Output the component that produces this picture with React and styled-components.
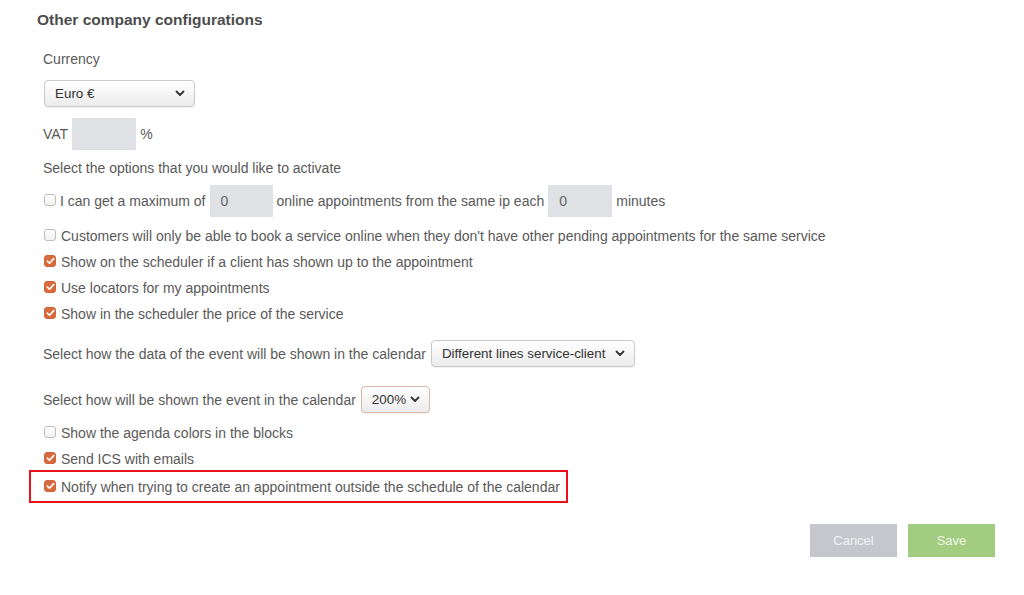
import React from "react";
import styled, { createGlobalStyle } from "styled-components";

const GlobalStyle = createGlobalStyle`
  body {
    margin: 0;
    background: #fff;
    font-family: "Liberation Sans", Arial, sans-serif;
    color: #595959;
  }
`;

function Chevron() {
  return (
    <svg width="10" height="7" viewBox="0 0 10 7">
      <path d="M1.5 1.5 L5 5 L8.5 1.5" fill="none" stroke="#333" strokeWidth="1.8" strokeLinecap="round" strokeLinejoin="round" />
    </svg>
  );
}

function Check({ checked }) {
  return (
    <Box checked={checked}>
      {checked && (
        <svg width="9" height="8" viewBox="0 0 9 8">
          <path d="M1.3 4.2 L3.5 6.2 L7.7 1.6" fill="none" stroke="#fff" strokeWidth="1.7" strokeLinecap="round" strokeLinejoin="round" />
        </svg>
      )}
    </Box>
  );
}

function Option({ checked, children }) {
  return (
    <OptionRow>
      <Check checked={checked} />
      <span>{children}</span>
    </OptionRow>
  );
}

function App() {
  return (
    <>
      <GlobalStyle />
      <Page>
        <Title>Other company configurations</Title>
        <Form>
          <Label>Currency</Label>
          <Select width={151} top={11}>
            <span>Euro €</span>
            <Chevron />
          </Select>

          <VatRow>
            <span>VAT</span>
            <NumberBox width={64} />
            <span>%</span>
          </VatRow>

          <Label top={8}>Select the options that you would like to activate</Label>

          <InputRow>
            <Check checked={false} />
            <span>I can get a maximum of</span>
            <NumberBox width={63}>0</NumberBox>
            <span>online appointments from the same ip each</span>
            <NumberBox width={64}>0</NumberBox>
            <span>minutes</span>
          </InputRow>

          <Group>
            <Option checked={false}>
              Customers will only be able to book a service online when they don't have other pending appointments for the same service
            </Option>
            <Option checked>Show on the scheduler if a client has shown up to the appointment</Option>
            <Option checked>Use locators for my appointments</Option>
            <Option checked>Show in the scheduler the price of the service</Option>
          </Group>

          <SelectRow top={13}>
            <span>Select how the data of the event will be shown in the calendar</span>
            <Select width={204}>
              <span>Different lines service-client</span>
              <Chevron />
            </Select>
          </SelectRow>

          <SelectRow top={19}>
            <span>Select how will be shown the event in the calendar</span>
            <Select width={69} focused>
              <span>200%</span>
              <Chevron />
            </Select>
          </SelectRow>

          <Group top={7}>
            <Option checked={false}>Show the agenda colors in the blocks</Option>
            <Option checked>Send ICS with emails</Option>
            <Highlight>
              <Option checked>Notify when trying to create an appointment outside the schedule of the calendar</Option>
            </Highlight>
          </Group>
        </Form>

        <Actions>
          <Button kind="cancel">Cancel</Button>
          <Button kind="save">Save</Button>
        </Actions>
      </Page>
    </>
  );
}

const Page = styled.div`
  width: 1024px;
  height: 595px;
  box-sizing: border-box;
  padding: 10px 29px 0 37px;
  font-size: 14px;
`;

const Title = styled.h2`
  margin: 0;
  font-size: 15.5px;
  line-height: 20px;
  font-weight: bold;
  color: #4d4d4d;
`;

const Form = styled.div`
  display: flex;
  flex-direction: column;
  align-items: flex-start;
  padding-left: 6px;
  margin-top: 19px;
`;

const Label = styled.div`
  line-height: 20px;
  margin-top: ${(p) => p.top || 0}px;
`;

const Select = styled.div`
  box-sizing: border-box;
  width: ${(p) => p.width}px;
  height: 27px;
  margin: ${(p) => p.top || 0}px 0 0 1px;
  padding: 0 9px 0 10px;
  display: flex;
  align-items: center;
  justify-content: space-between;
  border: 1px solid ${(p) => (p.focused ? "#dcb8a3" : "#c9c9c9")};
  border-radius: 4px;
  background: linear-gradient(#ffffff, #ececec);
  box-shadow: 0 1px 1px rgba(0, 0, 0, 0.06);
  color: #333;
  font-size: 13.4px;
  white-space: nowrap;
  flex-shrink: 0;
`;

const VatRow = styled.div`
  display: flex;
  align-items: center;
  gap: 4px;
  margin-top: 11px;
  height: 32px;
`;

const NumberBox = styled.div`
  box-sizing: border-box;
  width: ${(p) => p.width}px;
  height: 32px;
  padding-left: 11px;
  display: flex;
  align-items: center;
  background: #dfe1e4;
  color: #666;
  flex-shrink: 0;
`;

const InputRow = styled.div`
  display: flex;
  align-items: center;
  height: 32px;
  margin-top: 7px;
  gap: 4px;

  & > span:first-of-type {
    margin-left: 1px;
  }
`;

const Group = styled.div`
  display: flex;
  flex-direction: column;
  align-items: flex-start;
  margin-top: ${(p) => (p.top !== undefined ? p.top : 6)}px;
`;

const OptionRow = styled.div`
  display: flex;
  align-items: center;
  gap: 5px;
  height: 26px;
  padding-left: 1px;
  white-space: nowrap;
`;

const Box = styled.span`
  box-sizing: border-box;
  width: 12px;
  height: 12px;
  border-radius: 3px;
  display: inline-flex;
  align-items: center;
  justify-content: center;
  flex-shrink: 0;
  margin-top: -2px;
  background: ${(p) => (p.checked ? "#d86a3d" : "linear-gradient(#fff, #f1f1f1)")};
  border: 1px solid ${(p) => (p.checked ? "#d0643a" : "#bdbdbd")};
`;

const SelectRow = styled.div`
  display: flex;
  align-items: center;
  gap: 4px;
  margin-top: ${(p) => p.top}px;
`;

const Highlight = styled.div`
  margin: -2px 0 0 -14px;
  padding: 2px 6px 1px 12px;
  border: 2px solid #e8121a;
`;

const Actions = styled.div`
  display: flex;
  justify-content: flex-end;
  gap: 11px;
  margin-top: 21px;
`;

const Button = styled.button`
  width: 87px;
  height: 33px;
  border: none;
  font-family: "Liberation Sans", Arial, sans-serif;
  font-size: 13px;
  color: ${(p) => (p.kind === "save" ? "#eef6e6" : "#f2f2f4")};
  background: ${(p) => (p.kind === "save" ? "#a2cc7f" : "#c5c7cc")};
`;

export default App;
